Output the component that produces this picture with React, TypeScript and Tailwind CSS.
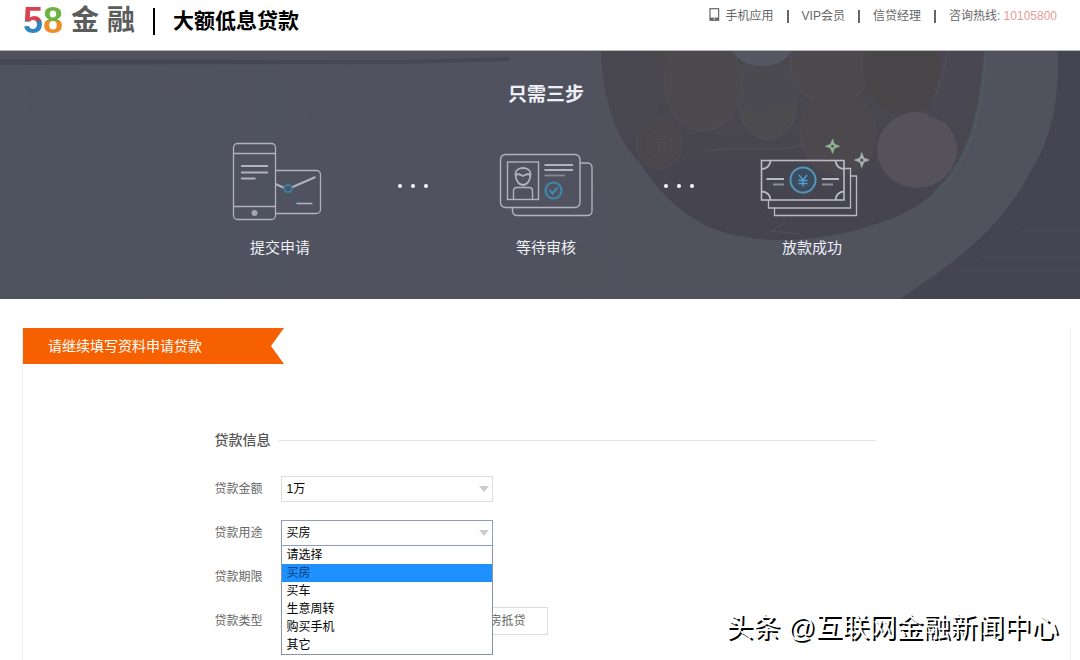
import { useState } from 'react';
import { clsx } from 'clsx';

const purposes = ['请选择', '买房', '买车', '生意周转', '购买手机', '其它'];

const navLinks = ['手机应用', 'VIP会员', '信贷经理'];

const Logo = () => (
  <a href="#" className="flex items-center">
    <span className="flex items-center font-['Liberation_Sans',sans-serif] text-[36px] leading-10 font-bold">
      <span className="bg-[linear-gradient(#d9414e_48%,#2e86c1_52%)] bg-clip-text text-transparent">5</span>
      <span className="bg-[linear-gradient(#6cb33f_48%,#f08a24_52%)] bg-clip-text text-transparent">8</span>
    </span>
    <span className="ml-2 flex gap-2 text-[28px] leading-10 font-bold text-[#5c5c5c]">
      <span>金</span>
      <span>融</span>
    </span>
  </a>
);

const NavDivider = () => <span className="h-[13px] w-[2px] bg-[#666]" />;

const Header = () => (
  <header className="flex h-[51px] items-start justify-between border-b border-[#b4b5b8] pr-[23px] pl-[23px]">
    <div className="flex h-[42px] items-center">
      <Logo />
      <span className="mx-[18px] h-[27px] w-[2px] bg-black" />
      <h1 className="text-[21px] leading-10 font-bold text-black">大额低息贷款</h1>
    </div>
    <nav className="flex h-8 items-center gap-[13px] text-xs text-[#666]">
      {navLinks.map((link, i) => (
        <span key={link} className="flex items-center gap-[13px]">
          <a href="#" className="flex items-center gap-[6px]">
            {i === 0 && (
              <svg viewBox="0 0 11 13" className="-mt-1 h-[13px] w-[11px]" fill="none" stroke="#666">
                <rect x="1" y="0.7" width="8.600" height="11.600" strokeWidth="1.2" />
                <path d="M1 10.800h8.600" strokeWidth="2.400" />
                <path d="M4.500 11h1.600" stroke="#fff" />
              </svg>
            )}
            {link}
          </a>
          <NavDivider />
        </span>
      ))}
      <span>
        咨询热线: <a href="tel:10105800" className="text-[#e89a9a]">10105800</a>
      </span>
    </nav>
  </header>
);

// bowl of coins on a wooden table
const HeroBackground = () => (
  <svg
    viewBox="0 0 1080 248"
    preserveAspectRatio="xMaxYMid slice"
    className="absolute inset-0 h-full w-full"
    aria-hidden="true"
  >
    <defs>
      <linearGradient id="table" x1="0" x2="1">
        <stop offset="0" stopColor="#4f535f" />
        <stop offset="0.55" stopColor="#50535f" />
        <stop offset="1" stopColor="#474553" />
      </linearGradient>
      <linearGradient id="bowl" x1="0" x2="0" y1="0" y2="1">
        <stop offset="0" stopColor="#4a484d" />
        <stop offset="1" stopColor="#444350" />
      </linearGradient>
      <clipPath id="inside">
        <path d="M601 0C603 50 616 88 640 112C665 152 700 180 745 186C790 194 850 186 900 164C955 138 980 95 985 0Z" />
      </clipPath>
    </defs>
    <rect width="1080" height="248" fill="url(#table)" />
    <path d="M0 0H560V5L0 10Z" fill="#51505d" />
    <path d="M0 8L400 9L510 6V10L400 13L0 14Z" fill="#454755" />
    <path d="M30 42H190M30 58H160M310 66H480" stroke="#4e515d" strokeWidth="3" />
    <path d="M590 0H1058C1060 50 1050 92 1031 120C1000 180 950 215 900 248H640C600 200 590 100 590 0Z" fill="#50525e" />
    <path d="M1058 0H1080V248H900C950 215 1000 180 1031 120C1050 92 1060 50 1058 0Z" fill="#454452" />
    <path d="M955 220H1080M980 206H1080M1020 180H1080" stroke="#4b4955" strokeWidth="2" opacity="0.6" />
    <g clipPath="url(#inside)">
      <rect x="590" width="410" height="200" fill="url(#bowl)" />
      <ellipse cx="628" cy="38" rx="34" ry="45" fill="#494850" />
      <ellipse cx="768" cy="57" rx="28" ry="31" fill="#4c4b4e" stroke="#545258" />
      <ellipse cx="760" cy="34" rx="42" ry="26" fill="#4b4a51" />
      <ellipse cx="703" cy="32" rx="39" ry="48" fill="#4c4a4f" stroke="#525055" />
      <ellipse cx="762" cy="-5" rx="30" ry="20" fill="#575663" />
      <ellipse cx="831" cy="12" rx="41" ry="42" fill="#4c4a4e" stroke="#575357" />
      <ellipse cx="905" cy="15" rx="42" ry="48" fill="#484649" />
      <ellipse cx="659" cy="93" rx="23" ry="25" fill="#4a474d" stroke="#504e55" />
      <ellipse cx="659" cy="93" rx="13" ry="14" fill="none" stroke="#504e55" />
      <path d="M654 91a6 6 0 1 1 6 9M659 90v8" fill="none" stroke="#545259" />
      <ellipse cx="838" cy="82" rx="38" ry="42" fill="#4b494d" stroke="#4f4d52" />
      <ellipse cx="917" cy="99" rx="40" ry="38" fill="#555359" />
      <path d="M705 100C740 95 770 102 805 94M665 126L680 138M765 184L787 170M770 180L800 183" stroke="#535159" fill="none" />
      <path d="M938 0C945 25 930 45 928 65L968 78L985 0Z" fill="#494752" />
      <path d="M948 0C944 20 940 35 934 48" fill="none" stroke="#53535b" />
    </g>
    <path d="M986 0C981 65 970 110 935 142" fill="none" stroke="#505a63" strokeWidth="4" opacity="0.7" />
    <circle cx="585" cy="220" r="26" fill="#4f525c" opacity="0.6" />
  </svg>
);

const ApplyIcon = () => (
  <svg viewBox="0 0 104 80" className="h-20 w-[104px]" fill="none" stroke="#b0b3be" strokeWidth="1.3">
    <rect x="5.500" y="3.500" width="42" height="76" rx="4" />
    <path d="M5.500 13.500h42M5.500 66.500h42" strokeWidth="1.6" />
    <path d="M13 26H40M13 32.500H40M13 38.500H27.500" strokeWidth="2" />
    <circle cx="26.500" cy="73" r="3" fill="#a3a6b0" stroke="none" />
    <path d="M47.500 30.500h41a4 4 0 0 1 4 4v35a4 4 0 0 1-4 4h-41" />
    <path d="M47.500 44l9 4M63.500 47.500L87.500 37" strokeWidth="2" />
    <circle cx="60" cy="48.500" r="3.700" stroke="#3a7c99" strokeWidth="2.200" />
    <path d="M68.500 63.500h16" strokeWidth="1.6" />
  </svg>
);

const ReviewIcon = () => (
  <svg viewBox="0 0 104 80" className="h-20 w-[104px]" fill="none" stroke="#b0b3be" strokeWidth="1.4">
    <rect x="6.500" y="14.500" width="79.500" height="53" rx="5" />
    <path d="M86 23h7.500a4.500 4.500 0 0 1 4.500 4.500v43.500a4.500 4.500 0 0 1-4.500 4.500H23a4.500 4.500 0 0 1-4.500-4.500V67.500" />
    <rect x="13.500" y="22" width="31" height="37.500" />
    <path d="M21.500 34c0-8 15-8 15 0 0 6-3 11-7.500 11s-7.500-5-7.500-11z" strokeWidth="1.8" />
    <path d="M21 35c4-2 5-.5 8 1 3-1.500 4-3 8-1" strokeWidth="1.8" />
    <path d="M19.500 59.500V51q0-3.500 3.500-3.500h12q3.500 0 3.500 3.500v8.500" />
    <path d="M50.500 25H79M50.500 30H79" strokeWidth="2.200" />
    <path d="M50.500 35.500H71" stroke="#858892" strokeWidth="1.8" />
    <circle cx="59.500" cy="50.500" r="8" stroke="#3f86ab" strokeWidth="2.200" />
    <path d="M55.500 50l3 3.500 5-6" stroke="#3f86ab" strokeWidth="2.200" />
  </svg>
);

const LoanIcon = () => (
  <svg viewBox="0 0 104 80" className="h-20 w-[104px]" fill="none" stroke="#b9bbc4" strokeWidth="1.3">
    <rect x="1.500" y="20.500" width="82.500" height="39.500" strokeWidth="1.6" />
    <path d="M84 28.500h6.500V68H8.500V60M90.500 36H96.500V75.500H14.500V68" />
    <path d="M10.500 20.500a8.500 8.500 0 0 1-8.500 8.500M75.500 20.500a8.500 8.500 0 0 0 8.500 8.500M10.500 60A8.500 8.500 0 0 0 2 51.500M75.500 60a8.500 8.500 0 0 1 8.500-8.500" strokeWidth="1.8" />
    <path d="M6.500 39H24M62 39H79" strokeWidth="1.8" />
    <path d="M13 44.500H24M62 44.500H73" stroke="#8e9099" strokeWidth="1.8" />
    <circle cx="43" cy="40" r="14.500" fill="#33526c" fillOpacity="0.6" stroke="none" />
    <circle cx="43" cy="40" r="12.500" stroke="#5b93b3" strokeWidth="2" />
    <path d="M39 35l4 5 4-5M43 40V46.500M38.500 40.500h9M38.500 43.500h9" stroke="#4fa0cf" strokeWidth="1.4" />
    <path d="M72.500 -1l2 5.200 5.200 2-5.200 2-2 5.200-2-5.200-5.200-2 5.200-2z" fill="#93b294" stroke="#93b294" strokeWidth="0.6" />
    <circle cx="72.500" cy="6.200" r="1.300" fill="#4a494d" stroke="none" />
    <path d="M101.800 12.600l2 5.500 5.500 2-5.500 2-2 5.500-2-5.500-5.500-2 5.500-2z" fill="#a9b0ae" stroke="#a9b0ae" strokeWidth="0.6" />
    <circle cx="101.800" cy="20.100" r="1.600" fill="#4a494d" stroke="none" />
  </svg>
);

const StepDots = () => (
  <div className="flex h-[92px] w-[133px] items-center justify-center gap-[9px]">
    <span className="h-1 w-1 rounded-full bg-white" />
    <span className="h-1 w-1 rounded-full bg-white" />
    <span className="h-1 w-1 rounded-full bg-white" />
  </div>
);

const Step = ({ icon, label }: { icon: React.ReactNode; label: string }) => (
  <li className="flex w-[133px] flex-col items-center [&>svg]:overflow-visible">
    {icon}
    <p className="mt-4 text-[15px] leading-6 text-[#eef0f6]">{label}</p>
  </li>
);

const Hero = () => (
  <section className="relative h-[248px] overflow-hidden bg-[#50535f]">
    <HeroBackground />
    <div className="relative pt-[30px] pl-3">
      <h2 className="text-center text-[19px] leading-7 font-bold text-[#eef0f6]">只需三步</h2>
      <ol className="mt-[31px] flex justify-center">
        <Step icon={<ApplyIcon />} label="提交申请" />
        <li aria-hidden="true"><StepDots /></li>
        <Step icon={<ReviewIcon />} label="等待审核" />
        <li aria-hidden="true"><StepDots /></li>
        <Step icon={<LoanIcon />} label="放款成功" />
      </ol>
    </div>
  </section>
);

const SelectArrow = () => (
  <svg viewBox="0 0 10 6" className="pointer-events-none absolute top-[10px] right-1 h-[6px] w-[10px]">
    <path d="M0 0h10L5 6z" fill="#ccc" />
  </svg>
);

const selectClass = 'h-[26px] w-full appearance-none border bg-white px-[5px] text-xs text-black outline-none';

const LoanForm = () => {
  const [purpose, setPurpose] = useState('买房');
  const [open, setOpen] = useState(true);

  return (
    <form className="mt-16 ml-[18.3%] max-w-[661px] text-xs text-[#666]">
      <div className="flex items-center gap-2">
        <h3 className="text-sm leading-6 font-medium text-[#555]">贷款信息</h3>
        <span className="h-px flex-1 bg-[#e2e2e2]" />
      </div>

      <div className="mt-[23px] flex flex-col gap-4">
        <div className="flex h-7 items-center">
          <label htmlFor="amount" className="w-[66px]">贷款金额</label>
          <div className="relative w-[212px]">
            <select id="amount" className={clsx(selectClass, 'border-[#ddd]')}>
              <option>1万</option>
            </select>
            <SelectArrow />
          </div>
        </div>

        <div className="flex h-7 items-center">
          <label htmlFor="purpose" className="w-[66px]">贷款用途</label>
          <div className="relative w-[212px]">
            <select
              id="purpose"
              value={purpose}
              onChange={(e) => setPurpose(e.target.value)}
              onClick={() => setOpen(!open)}
              className={clsx(selectClass, 'border-[#8d9cc4]')}
            >
              {purposes.map((item) => (
                <option key={item}>{item}</option>
              ))}
            </select>
            <SelectArrow />
            {open && (
              <ul role="listbox" className="absolute top-full left-0 z-10 w-full border border-t-0 border-[#8a93a8] bg-white text-black">
                {purposes.map((item) => (
                  <li
                    key={item}
                    role="option"
                    aria-selected={item === purpose}
                    onClick={() => {
                      setPurpose(item);
                      setOpen(false);
                    }}
                    className={clsx('h-[18px] px-[5px] leading-[18px]', item === purpose && 'bg-[#1e90ff] text-[#0b3f78]')}
                  >
                    {item}
                  </li>
                ))}
              </ul>
            )}
          </div>
        </div>

        <div className="flex h-7 items-center">
          <label htmlFor="term" className="w-[66px]">贷款期限</label>
          <div className="relative w-[212px]">
            <select id="term" className={clsx(selectClass, 'border-[#ddd]')} />
          </div>
        </div>

        <div className="flex h-7 items-center" role="group" aria-labelledby="type-label">
          <span id="type-label" className="w-[66px]">贷款类型</span>
          <button type="button" className="ml-[187px] h-7 w-20 border border-[#ddd] bg-white">
            房抵贷
          </button>
        </div>
      </div>
    </form>
  );
};

const App = () => {
  return (
    <div className="relative flex min-h-screen flex-col overflow-hidden bg-white font-['Liberation_Sans','Noto_Sans_CJK_SC',sans-serif]">
      <Header />
      <Hero />
      <main className="mt-[29px] mr-[9px] ml-[22px] flex-1 border-x border-[#f0f1f3]">
        <div className="flex h-9 w-[261px] items-center bg-[#f76000] pl-[25px] text-sm text-white [clip-path:polygon(0_0,100%_0,95%_50%,100%_100%,0_100%)]">
          请继续填写资料申请贷款
        </div>
        <LoanForm />
      </main>
      <p className="absolute right-[22px] bottom-3 z-20 text-[27px] leading-10 text-white [text-shadow:2px_2px_0_#000]">
        头条 @互联网金融新闻中心
      </p>
    </div>
  );
};

export default App;
